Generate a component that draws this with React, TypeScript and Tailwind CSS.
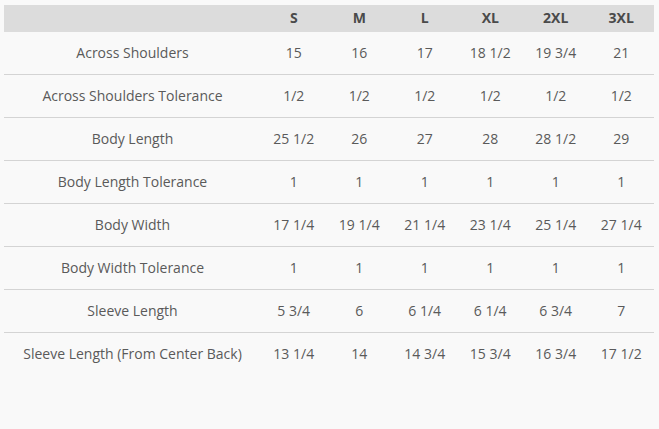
import React from "react";

const sizes = ["S", "M", "L", "XL", "2XL", "3XL"];
const rows: [string, string[]][] = [
  ["Across Shoulders", ["15", "16", "17", "18 1/2", "19 3/4", "21"]],
  ["Across Shoulders Tolerance", ["1/2", "1/2", "1/2", "1/2", "1/2", "1/2"]],
  ["Body Length", ["25 1/2", "26", "27", "28", "28 1/2", "29"]],
  ["Body Length Tolerance", ["1", "1", "1", "1", "1", "1"]],
  ["Body Width", ["17 1/4", "19 1/4", "21 1/4", "23 1/4", "25 1/4", "27 1/4"]],
  ["Body Width Tolerance", ["1", "1", "1", "1", "1", "1"]],
  ["Sleeve Length", ["5 3/4", "6", "6 1/4", "6 1/4", "6 3/4", "7"]],
  ["Sleeve Length (From Center Back)", ["13 1/4", "14", "14 3/4", "15 3/4", "16 3/4", "17 1/2"]],
];

export default function App() {
  return (
    <div
      className="w-[659px] h-[429px] bg-[#f9f9f9] pt-[5px] pl-[4px] text-[#5a5a5a] text-[14px]"
      style={{ fontFamily: '"Open Sans", sans-serif' }}
    >
      <div className="w-[650px]">
        <div className="grid grid-cols-[257px_repeat(6,1fr)] h-[27px] pb-[2px] bg-[#dcdcdc] items-center font-bold text-[#4a4a4a]">
          <div />
          {sizes.map((s) => (
            <div key={s} className="text-center">{s}</div>
          ))}
        </div>
        {rows.map(([label, vals], i) => (
          <div
            key={label}
            className={`grid grid-cols-[257px_repeat(6,1fr)] h-[43px] pb-[2px] items-center ${
              i < rows.length - 1 ? "border-b border-[#d4d4d4]" : ""
            }`}
          >
            <div className="text-center">{label}</div>
            {vals.map((v, j) => (
              <div key={j} className="text-center">{v}</div>
            ))}
          </div>
        ))}
      </div>
    </div>
  );
}
